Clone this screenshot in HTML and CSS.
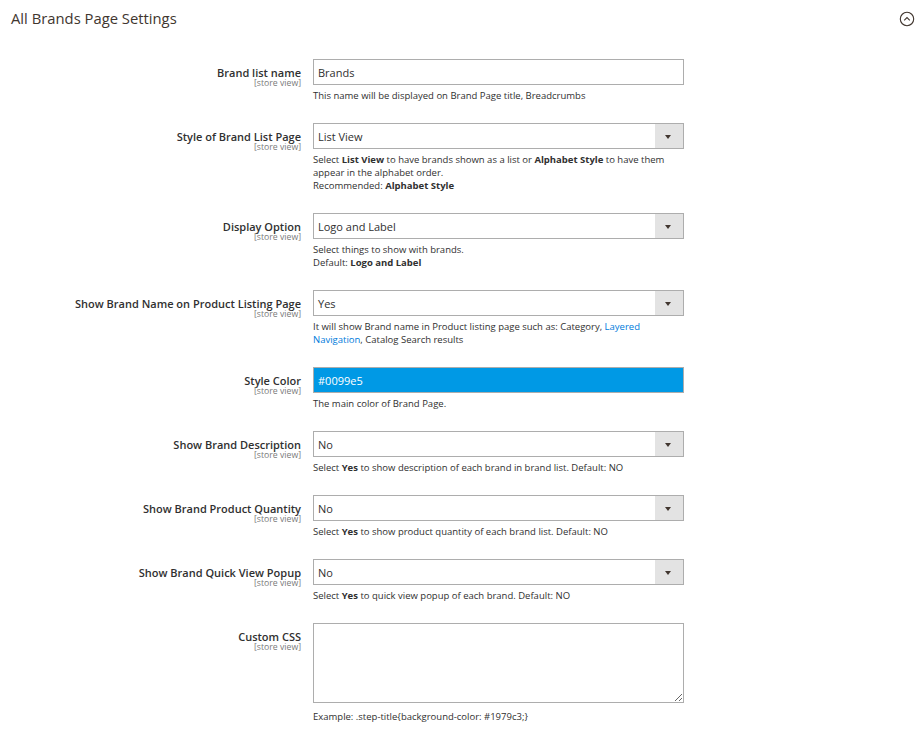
FILE: index.html
```html
<!DOCTYPE html>
<html lang="en">
<head>
<meta charset="utf-8">
<title>All Brands Page Settings</title>
<link rel="stylesheet" href="styles.css">
</head>
<body>
<section class="config-section">
  <header class="section-header">
    <h2 class="section-title">All Brands Page Settings</h2>
    <button class="collapse-btn" type="button" aria-label="Collapse">
      <svg width="16" height="16" viewBox="0 0 16 16" aria-hidden="true">
        <circle cx="8" cy="8" r="6.7" fill="none" stroke="#41362f" stroke-width="1.1"/>
        <path d="M5.2 9.4 L8 6.6 L10.8 9.4" fill="none" stroke="#41362f" stroke-width="1.1"/>
      </svg>
    </button>
  </header>

  <div class="fields">
    <div class="row">
      <div class="label"><span class="label-text">Brand list name</span><span class="scope">[store view]</span></div>
      <div class="control">
        <input class="input" type="text" value="Brands">
        <p class="note">This name will be displayed on Brand Page title, Breadcrumbs</p>
      </div>
    </div>

    <div class="row">
      <div class="label"><span class="label-text">Style of Brand List Page</span><span class="scope">[store view]</span></div>
      <div class="control">
        <div class="select"><span class="select-value">List View</span><span class="select-arrow"></span></div>
        <p class="note">Select <b>List View</b> to have brands shown as a list or <b>Alphabet Style</b> to have them appear in the alphabet order.<br>Recommended: <b>Alphabet Style</b></p>
      </div>
    </div>

    <div class="row">
      <div class="label"><span class="label-text">Display Option</span><span class="scope">[store view]</span></div>
      <div class="control">
        <div class="select"><span class="select-value">Logo and Label</span><span class="select-arrow"></span></div>
        <p class="note">Select things to show with brands.<br>Default: <b>Logo and Label</b></p>
      </div>
    </div>

    <div class="row">
      <div class="label"><span class="label-text">Show Brand Name on Product Listing Page</span><span class="scope">[store view]</span></div>
      <div class="control">
        <div class="select"><span class="select-value">Yes</span><span class="select-arrow"></span></div>
        <p class="note">It will show Brand name in Product listing page such as: Category, <a href="#" class="link">Layered Navigation</a>, Catalog Search results</p>
      </div>
    </div>

    <div class="row">
      <div class="label"><span class="label-text">Style Color</span><span class="scope">[store view]</span></div>
      <div class="control">
        <input class="input input-color" type="text" value="#0099e5">
        <p class="note">The main color of Brand Page.</p>
      </div>
    </div>

    <div class="row">
      <div class="label"><span class="label-text">Show Brand Description</span><span class="scope">[store view]</span></div>
      <div class="control">
        <div class="select"><span class="select-value">No</span><span class="select-arrow"></span></div>
        <p class="note">Select <b>Yes</b> to show description of each brand in brand list. Default: NO</p>
      </div>
    </div>

    <div class="row">
      <div class="label"><span class="label-text">Show Brand Product Quantity</span><span class="scope">[store view]</span></div>
      <div class="control">
        <div class="select"><span class="select-value">No</span><span class="select-arrow"></span></div>
        <p class="note">Select <b>Yes</b> to show product quantity of each brand list. Default: NO</p>
      </div>
    </div>

    <div class="row">
      <div class="label"><span class="label-text">Show Brand Quick View Popup</span><span class="scope">[store view]</span></div>
      <div class="control">
        <div class="select"><span class="select-value">No</span><span class="select-arrow"></span></div>
        <p class="note">Select <b>Yes</b> to quick view popup of each brand. Default: NO</p>
      </div>
    </div>

    <div class="row">
      <div class="label"><span class="label-text">Custom CSS</span><span class="scope">[store view]</span></div>
      <div class="control">
        <textarea class="textarea"></textarea>
        <p class="note note-spaced">Example: .step-title{background-color: #1979c3;}</p>
      </div>
    </div>
  </div>
</section>
</body>
</html>
```

FILE: styles.css
```css
* { box-sizing: border-box; }

body {
  margin: 0;
  background: #ffffff;
  font-family: "Open Sans", "Noto Sans", "Liberation Sans", sans-serif;
  color: #303030;
}

.section-header {
  display: flex;
  align-items: center;
  justify-content: space-between;
  height: 36px;
  padding: 0 7px 0 11px;
}

.section-title {
  margin: 0;
  font-size: 14.8px;
  font-weight: 500;
  color: #41362f;
  line-height: 20px;
}

.collapse-btn {
  border: 0;
  background: none;
  padding: 0;
  width: 16px;
  height: 16px;
  display: flex;
  margin-top: 2px;
}

.fields {
  padding-top: 23px;
}

.row {
  display: grid;
  grid-template-columns: 301px 371px;
  column-gap: 12px;
  margin-bottom: 21px;
}

.label {
  display: flex;
  flex-direction: column;
  align-items: flex-end;
  padding-top: 7px;
  text-align: right;
}

.label-text {
  font-size: 11px;
  line-height: 13px;
  font-weight: 600;
  color: #303030;
}

.scope {
  font-size: 8.7px;
  line-height: 9px;
  color: #7a7a7a;
}

.control {
  display: flex;
  flex-direction: column;
}

.input,
.select,
.textarea {
  width: 371px;
  height: 26px;
  border: 1px solid #adadad;
  background: #ffffff;
  font-family: inherit;
  font-size: 11px;
  color: #303030;
}

.input {
  padding: 0 4px;
  outline: none;
}

.input-color {
  background: #0099e5;
  color: #ffffff;
}

.select {
  display: flex;
  align-items: stretch;
}

.select-value {
  flex: 1;
  display: flex;
  align-items: center;
  padding-left: 4px;
  line-height: 13px;
}

.select-arrow {
  width: 28px;
  background: #e3e3e3;
  position: relative;
}

.select-arrow::after {
  content: "";
  position: absolute;
  left: 10px;
  top: 11px;
  border-left: 3.5px solid transparent;
  border-right: 3.5px solid transparent;
  border-top: 4px solid #41362f;
}

.textarea {
  height: 80px;
  resize: vertical;
  padding: 4px;
  display: block;
}

.note {
  margin: 4px 0 0;
  font-size: 9.5px;
  line-height: 13px;
  color: #303030;
}

.note b {
  font-weight: 700;
}

.note-spaced {
  margin-top: 7px;
}

.link {
  color: #007bdb;
  text-decoration: none;
}
```
